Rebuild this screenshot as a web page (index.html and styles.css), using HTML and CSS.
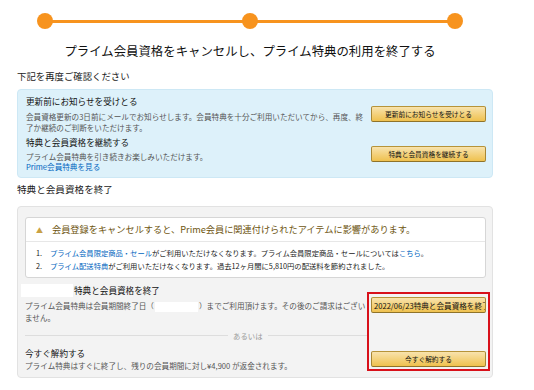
FILE: index.html
```html
<!DOCTYPE html>
<html lang="ja">
<head>
  <meta charset="UTF-8" />
  <meta name="viewport" content="width=device-width, initial-scale=1.0" />
  <title>プライム会員資格をキャンセル</title>
  <link rel="stylesheet" href="styles.css">
</head>
<body>
  <div class="page">
    <div class="steps">
      <span class="dot"></span>
      <span class="dot"></span>
      <span class="dot"></span>
    </div>

    <h1 class="title">プライム会員資格をキャンセルし、プライム特典の利用を終了する</h1>
    <p class="lead">下記を再度ご確認ください</p>

    <div class="box box-blue">
      <div class="option">
        <div class="option-text">
          <h3>更新前にお知らせを受けとる</h3>
          <p>会員資格更新の3日前にメールでお知らせします。会員特典を十分ご利用いただいてから、再度、終了か継続のご判断をいただけます。</p>
        </div>
        <button class="btn">更新前にお知らせを受けとる</button>
      </div>
      <div class="option">
        <div class="option-text">
          <h3>特典と会員資格を継続する</h3>
          <p>プライム会員特典を引き続きお楽しみいただけます。</p>
          <a class="link" href="#">Prime会員特典を見る</a>
        </div>
        <button class="btn">特典と会員資格を継続する</button>
      </div>
    </div>

    <h2 class="section-title">特典と会員資格を終了</h2>

    <div class="box box-gray">
      <div class="alert">
        <div class="alert-head"><span class="alert-icon">▲</span>会員登録をキャンセルすると、Prime会員に関連付けられたアイテムに影響があります。</div>
        <ol class="alert-list">
          <li><span class="num">1.</span><span><a class="link" href="#">プライム会員限定商品・セール</a>がご利用いただけなくなります。プライム会員限定商品・セールについては<a class="link" href="#">こちら</a>。</span></li>
          <li><span class="num">2.</span><span><a class="link" href="#">プライム配送特典</a>がご利用いただけなくなります。過去12ヶ月間に5,810円の配送料を節約されました。</span></li>
        </ol>
      </div>

      <div class="cancel">
        <div class="cancel-text">
          <div class="cancel-head"><span class="redact"></span><h3>特典と会員資格を終了</h3></div>
          <p><span>プライム会員特典は会員期間終了日（</span><span class="redact redact-inline"></span><span>）までご利用頂けます。その後のご請求はござい</span><span>ません。</span></p>
          <div class="or"><span>あるいは</span></div>
          <h3>今すぐ解約する</h3>
          <p class="cancel-note">プライム特典はすぐに終了し、残りの会員期間に対し¥4,900 が返金されます。</p>
        </div>
        <div class="cancel-actions">
          <button class="btn btn-clip">2022/06/23特典と会員資格を終了</button>
          <button class="btn">今すぐ解約する</button>
        </div>
      </div>
    </div>
  </div>
</body>
</html>
```

FILE: styles.css
```css
body {
  margin: 0;
  background: #fff;
  color: #111;
  font-family: "Noto Sans CJK JP", "Noto Sans", sans-serif;
}

.page {
  width: 476px;
  padding: 13px 0 0 17px;
}

.steps {
  display: flex;
  justify-content: space-between;
  width: 426px;
  margin-left: 20px;
  background: linear-gradient(#f7931e, #f7931e) center / calc(100% - 16px) 3px no-repeat;
}

.dot {
  width: 16px;
  height: 16px;
  border-radius: 50%;
  background: #f7931e;
}

.title {
  margin: 14px 0 0 0;
  width: 466px;
  text-align: center;
  font-size: 12.4px;
  line-height: 16px;
  font-weight: normal;
  color: #111;
}

.lead {
  margin: 11px 0 0 0;
  font-size: 9.4px;
  line-height: 12px;
  color: #222;
}

.box {
  border-radius: 4px;
}

.box-blue {
  margin-top: 7px;
  background: #ddf1fa;
  border: 1px solid #cde8f5;
  padding: 5px 6px 6px 8px;
}

.option {
  display: flex;
  align-items: center;
}

.option + .option {
  margin-top: 3px;
}

.option-text {
  flex: 1;
  padding-right: 1px;
}

.option-text h3,
.cancel-text h3 {
  margin: 0;
  font-size: 8.6px;
  line-height: 12px;
  font-weight: normal;
  color: #111;
}

.option-text p,
.cancel-text p {
  margin: 4px 0 0 0;
  font-size: 7.6px;
  line-height: 11px;
  color: #555;
}

.option + .option p {
  margin-top: 3px;
}

.link {
  color: #0066c0;
  text-decoration: none;
}

.option-text .link {
  display: block;
  font-size: 7.6px;
  line-height: 9px;
}

.btn {
  flex: none;
  width: 115px;
  height: 16px;
  padding: 0 2px;
  font-family: inherit;
  font-size: 6.7px;
  color: #111;
  background: linear-gradient(#f8e3ad, #efc14e);
  border: 1px solid #a88734;
  border-color: #b79439 #a88734 #8f7329;
  border-radius: 2px;
  white-space: nowrap;
  overflow: hidden;
  cursor: pointer;
}

.btn-clip {
  text-align: left;
  font-size: 7.6px;
}

.section-title {
  margin: 5px 0 0 0;
  font-size: 9.6px;
  line-height: 12px;
  font-weight: normal;
  color: #222;
}

.box-gray {
  margin-top: 11px;
  background: #f3f3f3;
  border: 1px solid #e2e2e2;
  padding: 10px 1px 6px 7px;
}

.alert {
  margin-right: 5px;
  background: #fff;
  border: 1px solid #d6d6d6;
  border-radius: 3px;
}

.alert-head {
  padding: 5px 8px 5px 10px;
  font-size: 9.2px;
  line-height: 12px;
  color: #6e5510;
  border-bottom: 1px solid #e7e7e7;
}

.alert-icon {
  display: inline-block;
  width: 16px;
  font-size: 7px;
  color: #c9a144;
}

.alert-list {
  list-style: none;
  margin: 0;
  padding: 5px 8px 4px 10px;
  font-size: 7.3px;
  line-height: 13px;
  color: #222;
}

.alert-list li {
  display: flex;
}

.num {
  flex: none;
  width: 14px;
}

.cancel {
  display: flex;
  margin-top: 5px;
}

.cancel-text {
  flex: 1;
}

.cancel-head {
  display: flex;
  align-items: center;
  height: 14px;
}

.cancel-text p {
  margin-top: 3px;
}

.cancel-text .cancel-note {
  margin-top: 1px;
}

.redact {
  display: inline-block;
  width: 52px;
  height: 13px;
  margin-left: -4px;
  background: #fff;
}

.cancel-head .redact {
  flex: none;
  margin-right: 1px;
}

.redact-inline {
  width: 43px;
  height: 10px;
  margin: 0 1px;
  vertical-align: middle;
}

.or {
  display: flex;
  align-items: center;
  gap: 5px;
  margin: 7px 0 5px 0;
  font-size: 7.4px;
  line-height: 12px;
  color: #999;
}

.or::before,
.or::after {
  content: "";
  height: 1px;
  background: #ddd;
}

.or::before {
  flex: 0 0 203px;
}

.or::after {
  flex: 1;
}

.cancel-actions {
  display: flex;
  flex-direction: column;
  justify-content: space-between;
  align-self: flex-start;
  width: 115px;
  height: 70px;
  margin: 9px 1px 0 0;
  padding: 3px 2px 2px 2px;
  border: 2px solid #d8101a;
}
```
